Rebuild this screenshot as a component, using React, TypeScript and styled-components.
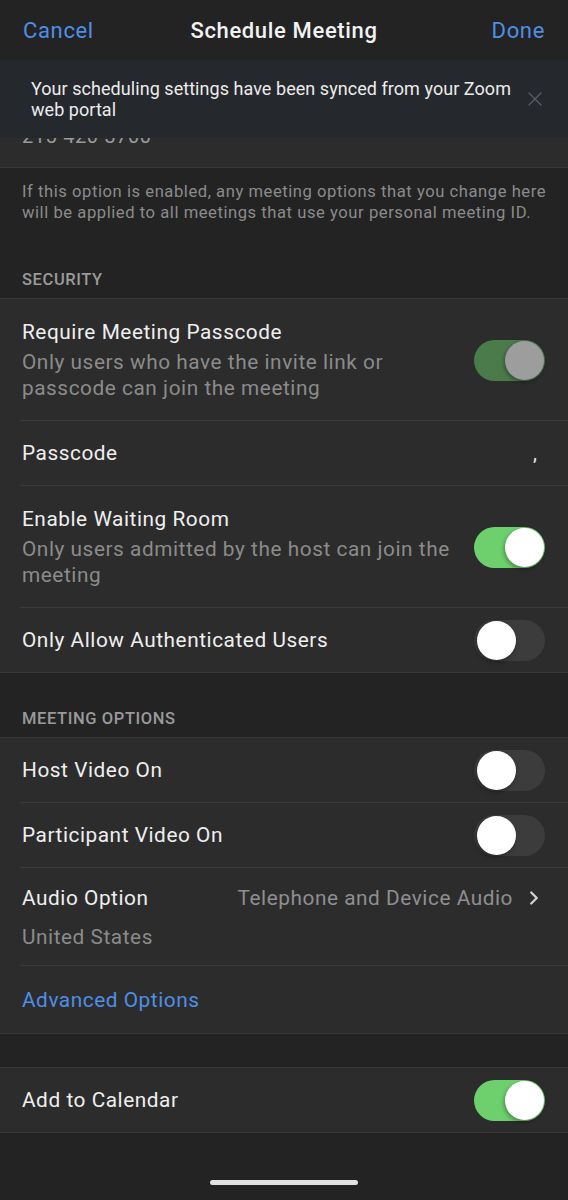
import React from "react";
import styled, { createGlobalStyle } from "styled-components";
import { ChevronRight, X } from "lucide-react";

const GlobalStyle = createGlobalStyle`
  html, body {
    margin: 0;
    padding: 0;
    background: #232323;
  }
  body {
    font-family: Roboto, "Liberation Sans", sans-serif;
    -webkit-font-smoothing: antialiased;
  }
`;

const Screen = styled.div`
  width: 568px;
  min-height: 1200px;
  background: #232323;
  display: flex;
  flex-direction: column;
`;

const NavBar = styled.header`
  height: 60px;
  padding: 0 23px 0 23px;
  display: flex;
  align-items: center;
  justify-content: space-between;
  font-size: 22px;
  letter-spacing: 0.65px;
`;

const NavButton = styled.span<{ $right?: boolean }>`
  color: #4f8fe6;
  width: 80px;
  text-align: ${(p) => (p.$right ? "right" : "left")};
`;

const NavTitle = styled.span`
  color: #f2f2f2;
  font-weight: 500;
`;

const Banner = styled.div`
  height: 78px;
  background: #25282d;
  display: flex;
  align-items: center;
  padding: 0 21px 0 31px;
`;

const BannerText = styled.p`
  margin: 0;
  flex: 1;
  min-width: 0;
  color: #ececec;
  font-size: 18px;
  line-height: 21px;
  letter-spacing: 0.05px;
`;

const CloseIcon = styled(X)`
  flex: none;
`;

const ClippedRow = styled.div`
  height: 29px;
  overflow: hidden;
  background: #2c2c2c;
  border-bottom: 1px solid #383838;
  padding-left: 22px;
`;

const ClippedNumber = styled.div`
  margin-top: -14px;
  font-size: 20px;
  line-height: 24px;
  color: #9a9a9a;
  letter-spacing: 0.5px;
`;

const Note = styled.p`
  margin: 0;
  padding: 13px 20px 0 22px;
  color: #8b8b8b;
  font-size: 16.6px;
  line-height: 21px;
  letter-spacing: 0.55px;
`;

const SectionLabel = styled.div<{ $top: number }>`
  padding: ${(p) => p.$top}px 22px 8px;
  color: #9a9a9a;
  font-size: 16.5px;
  font-weight: 500;
  line-height: 20px;
  letter-spacing: 0.6px;
  text-transform: uppercase;
`;

const Group = styled.section`
  background: #2c2c2c;
  border-top: 1px solid #383838;
  border-bottom: 1px solid #383838;
`;

const Spacer = styled.div`
  height: 33px;
`;

const Row = styled.div<{ $height?: number }>`
  margin-left: 20px;
  padding: 0 23px 0 2px;
  min-height: ${(p) => p.$height ?? 64}px;
  display: flex;
  align-items: center;
  gap: 16px;
  & + & {
    border-top: 1px solid #3a3a3a;
  }
`;

const TallRow = styled(Row)`
  padding-top: 20px;
  padding-bottom: 19px;
`;

const RowText = styled.div`
  flex: 1;
  display: flex;
  flex-direction: column;
`;

const Title = styled.span`
  color: #efefef;
  font-size: 20.8px;
  line-height: 26px;
  letter-spacing: 0.55px;
`;

const Subtitle = styled.span<{ $gap?: number }>`
  color: #8b8b8b;
  font-size: 20.8px;
  line-height: 26px;
  letter-spacing: 0.55px;
  margin-top: ${(p) => p.$gap ?? 4}px;
`;

const LinkText = styled.span`
  color: #4f8fe6;
  font-size: 20.8px;
  line-height: 26px;
  letter-spacing: 0.55px;
`;

const Value = styled.span`
  color: #8f8f8f;
  font-size: 20.8px;
  line-height: 26px;
  letter-spacing: 0.55px;
`;

const PassValue = styled.span`
  color: #e8e8e8;
  font-size: 20px;
  margin-right: 8px;
`;

const AudioRow = styled(Row)`
  padding-top: 17px;
  padding-bottom: 15px;
  align-items: flex-start;
  gap: 0;
`;

const AudioTop = styled.div`
  display: flex;
  align-items: center;
  justify-content: space-between;
`;

const AudioValue = styled.div`
  display: flex;
  align-items: center;
  gap: 10px;
  color: #d0d0d0;
`;

const Track = styled.div<{ $on: boolean; $dim?: boolean }>`
  flex: none;
  width: 71px;
  height: 41px;
  border-radius: 21px;
  box-sizing: border-box;
  padding: 1px 1px 1px 3px;
  display: flex;
  justify-content: ${(p) => (p.$on ? "flex-end" : "flex-start")};
  align-items: center;
  background: ${(p) => (p.$on ? (p.$dim ? "#4b7b4b" : "#6dd06d") : "#3c3c3c")};
`;

const Knob = styled.div<{ $dim?: boolean }>`
  width: 39px;
  height: 39px;
  border-radius: 50%;
  background: ${(p) => (p.$dim ? "#9d9d9d" : "#ffffff")};
  box-shadow: -1px 2px 4px rgba(0, 0, 0, 0.35);
`;

const HomeBar = styled.div`
  width: 148px;
  height: 5px;
  border-radius: 3px;
  background: #e2e2e2;
  margin: 47px auto 0;
`;

function Toggle({ on, dim }: { on: boolean; dim?: boolean }) {
  return (
    <Track $on={on} $dim={dim}>
      <Knob $dim={dim} />
    </Track>
  );
}

export default function App() {
  return (
    <Screen>
      <GlobalStyle />
      <NavBar>
        <NavButton>Cancel</NavButton>
        <NavTitle>Schedule Meeting</NavTitle>
        <NavButton $right>Done</NavButton>
      </NavBar>

      <Banner>
        <BannerText>
          Your scheduling settings have been synced from your Zoom
          <br />
          web portal
        </BannerText>
        <CloseIcon size={24} color="#5b5e66" strokeWidth={1.3} />
      </Banner>

      <ClippedRow>
        <ClippedNumber>215-420-3700</ClippedNumber>
      </ClippedRow>

      <Note>
        If this option is enabled, any meeting options that you change here
        will be applied to all meetings that use your personal meeting ID.
      </Note>

      <SectionLabel $top={47}>Security</SectionLabel>
      <Group>
        <TallRow>
          <RowText>
            <Title>Require Meeting Passcode</Title>
            <Subtitle>
              Only users who have the invite link or
              <br />
              passcode can join the meeting
            </Subtitle>
          </RowText>
          <Toggle on dim />
        </TallRow>
        <Row>
          <RowText>
            <Title>Passcode</Title>
          </RowText>
          <PassValue>,</PassValue>
        </Row>
        <TallRow>
          <RowText>
            <Title>Enable Waiting Room</Title>
            <Subtitle>
              Only users admitted by the host can join the
              <br />
              meeting
            </Subtitle>
          </RowText>
          <Toggle on />
        </TallRow>
        <Row>
          <RowText>
            <Title>Only Allow Authenticated Users</Title>
          </RowText>
          <Toggle on={false} />
        </Row>
      </Group>

      <SectionLabel $top={36}>Meeting Options</SectionLabel>
      <Group>
        <Row>
          <RowText>
            <Title>Host Video On</Title>
          </RowText>
          <Toggle on={false} />
        </Row>
        <Row>
          <RowText>
            <Title>Participant Video On</Title>
          </RowText>
          <Toggle on={false} />
        </Row>
        <AudioRow>
          <RowText>
            <AudioTop>
              <Title>Audio Option</Title>
              <AudioValue>
                <Value>Telephone and Device Audio</Value>
                <ChevronRight size={22} strokeWidth={2.6} />
              </AudioValue>
            </AudioTop>
            <Subtitle $gap={13}>United States</Subtitle>
          </RowText>
        </AudioRow>
        <Row $height={67}>
          <LinkText>Advanced Options</LinkText>
        </Row>
      </Group>

      <Spacer />
      <Group>
        <Row>
          <RowText>
            <Title>Add to Calendar</Title>
          </RowText>
          <Toggle on />
        </Row>
      </Group>

      <HomeBar />
    </Screen>
  );
}
